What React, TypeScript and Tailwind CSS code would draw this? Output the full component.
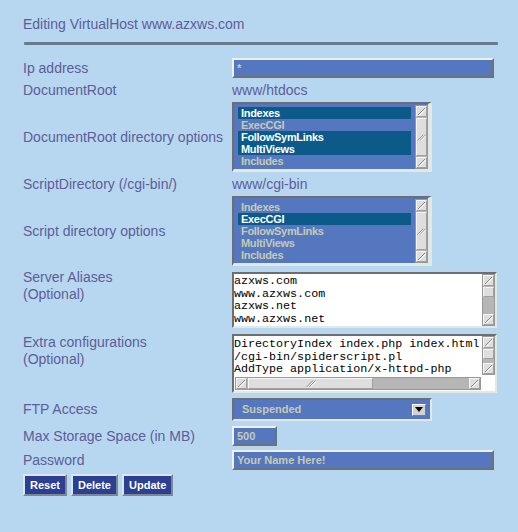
import React from "react";

const LABEL = "w-[209px] shrink-0 text-[14px] leading-[17px] text-[#5d5d98]";
const VALUE = "text-[14px] leading-[17px] text-[#5d5d98]";
const FIELD_TEXT = "font-bold text-[11px] text-[#c5cbb3]";
const INSET =
  "border-t-2 border-l-2 border-t-[#6e6e6e] border-l-[#6e6e6e] border-b-[#e4e8e4] border-r-[#e4e8e4]";
const INPUT =
  "h-[20px] border-2 border-t-[#eef2f4] border-l-[#eef2f4] border-b-[#6c7378] border-r-[#6c7378] bg-[#5577bf] pl-[3px] font-bold text-[11px] text-[#c5cbb3] outline-none";
const MONO = "font-['Liberation_Mono','Courier_New',monospace] text-[11.7px] leading-[12.5px] text-black";

const OPTS = ["Indexes", "ExecCGI", "FollowSymLinks", "MultiViews", "Includes"];

function Btn() {
  return (
    <div className="h-[11px] w-[11px] shrink-0 border border-t-[#f6f6f6] border-l-[#f6f6f6] border-b-[#a0a0a0] border-r-[#a0a0a0] bg-[#dedede]">
      <svg width="9" height="9" viewBox="0 0 9 9" className="block">
        <path d="M1 8 L8 1" stroke="#8a8a8a" strokeWidth="1" />
        <path d="M2 8.6 L8.6 2" stroke="#ffffff" strokeWidth="1" />
      </svg>
    </div>
  );
}

function Grip() {
  return (
    <svg width="10" height="9" viewBox="0 0 10 9" className="block">
      <path d="M0.5 8 L7 1.5" stroke="#8a8a8a" strokeWidth="1" />
      <path d="M1.5 8.5 L7.8 2.2" stroke="#ffffff" strokeWidth="1" />
      <path d="M3 8 L9.5 1.5" stroke="#8a8a8a" strokeWidth="1" />
      <path d="M4 8.5 L10 2.5" stroke="#ffffff" strokeWidth="1" />
    </svg>
  );
}

const THUMB =
  "flex items-center justify-center border border-t-[#f6f6f6] border-l-[#f6f6f6] border-b-[#a0a0a0] border-r-[#a0a0a0] bg-[#dedede]";

// thumb not given => the thumb fills the whole track
function VScroll({ className, thumb }: { className: string; thumb?: string }) {
  return (
    <div className={"flex w-[13px] shrink-0 flex-col gap-px border border-[#979797] bg-[#b6b6b6] " + className}>
      <Btn />
      <div className={THUMB + " " + (thumb ?? "flex-1")}>{!thumb && <Grip />}</div>
      {thumb && <div className="flex-1" />}
      <Btn />
    </div>
  );
}

function HScroll() {
  return (
    <div className="ml-px flex h-[13px] w-[246px] shrink-0 gap-px border border-[#979797] bg-[#b6b6b6]">
      <Btn />
      <div className={THUMB + " w-[125px]"}>
        <Grip />
      </div>
      <div className="flex-1" />
      <Btn />
    </div>
  );
}

function OptionList({ selected }: { selected: string[] }) {
  return (
    <div
      className={
        "flex h-[70px] w-[200px] bg-[#5577bf] border-b-[3px] border-r-[4px] " + INSET
      }
    >
      <div className="flex-1 px-[4px] pt-[3px]">
        {OPTS.map((o) => {
          const on = selected.includes(o);
          return (
            <div
              key={o}
              className={
                "h-[12px] px-[3px] text-[11px] leading-[12px] font-bold tracking-[-0.3px] " +
                (on ? "bg-[#0b5a8a] text-white" : "text-[#c5cbb3]")
              }
            >
              {o}
            </div>
          );
        })}
      </div>
      <VScroll className="mt-px h-[64px]" />
    </div>
  );
}

function Button({ children }: { children: React.ReactNode }) {
  return (
    <button
      type="button"
      className="h-[22px] border-2 border-t-[#dde6ee] border-l-[#dde6ee] border-b-[#7f8791] border-r-[#7f8791] bg-[#2b3f93] px-[5px] text-[11px] font-bold text-white"
    >
      {children}
    </button>
  );
}

export default function App() {
  return (
    <div className="min-h-screen w-full bg-[#b7d7f0] pl-[23px] pt-[14px] font-['Liberation_Sans',Arial,sans-serif]">
      <h1 className="text-[14px] leading-[20px] font-normal text-[#5d5d98]">
        Editing VirtualHost www.azxws.com
      </h1>
      <div className="ml-px mt-[8px] h-[3px] w-[474px] rounded-[1px] bg-[#687b8d]" />

      <div className="mt-[13px] flex flex-col">
        <div className="flex h-[20px] items-center">
          <div className={LABEL}>Ip address</div>
          <input readOnly defaultValue="*" className={INPUT + " w-[262px]"} />
        </div>

        <div className="mt-[2px] flex h-[20px] items-center">
          <div className={LABEL}>DocumentRoot</div>
          <div className={VALUE}>www/htdocs</div>
        </div>

        <div className="mt-[2px] flex items-center">
          <div className={LABEL}>DocumentRoot directory options</div>
          <OptionList selected={["Indexes", "FollowSymLinks", "MultiViews"]} />
        </div>

        <div className="mt-[2px] flex h-[20px] items-center">
          <div className={LABEL}>ScriptDirectory (/cgi-bin/)</div>
          <div className={VALUE}>www/cgi-bin</div>
        </div>

        <div className="mt-[2px] flex items-center">
          <div className={LABEL}>Script directory options</div>
          <OptionList selected={["ExecCGI"]} />
        </div>

        <div className="mt-[6px] flex items-start">
          <div className={LABEL + " -mt-[3px]"}>
            Server Aliases
            <br />
            (Optional)
          </div>
          <div className={"flex h-[56px] w-[265px] border-2 bg-white " + INSET}>
            <div className={"flex-1 overflow-hidden whitespace-pre pt-px " + MONO}>
              {"azxws.com\nwww.azxws.com\nazxws.net\nwww.azxws.net\nmail.azxws.com"}
            </div>
            <VScroll className="h-[52px]" thumb="h-[10px]" />
          </div>
        </div>

        <div className="mt-[6px] flex items-start">
          <div className={LABEL + " leading-[16px]"}>
            Extra configurations
            <br />
            (Optional)
          </div>
          <div className={"flex h-[59px] w-[265px] flex-col border-2 bg-white " + INSET}>
            <div className="flex h-[41px]">
              <div className={"flex-1 overflow-hidden whitespace-pre pt-[2px] " + MONO}>
                {"DirectoryIndex index.php index.html\n/cgi-bin/spiderscript.pl\nAddType application/x-httpd-php"}
              </div>
              <VScroll className="h-[39px]" thumb="h-[10px]" />
            </div>
            <HScroll />
          </div>
        </div>

        <div className="mt-[5px] flex items-center">
          <div className={LABEL}>FTP Access</div>
          <div className={"flex h-[23px] w-[200px] items-center border-2 bg-[#5577bf] pl-[8px] pr-[4px] " + INSET}>
            <span className={FIELD_TEXT + " flex-1"}>Suspended</span>
            <div className="flex h-[12px] w-[14px] items-center justify-center border border-t-white border-l-white border-b-[#7c7c7c] border-r-[#7c7c7c] bg-[#d2d2d2]">
              <svg width="8" height="5" viewBox="0 0 8 5" className="block">
                <polygon points="0,0 8,0 4,5" fill="#000" />
              </svg>
            </div>
          </div>
        </div>

        <div className="mt-[5px] flex h-[20px] items-center">
          <div className={LABEL}>Max Storage Space (in MB)</div>
          <input readOnly defaultValue="500" className={INPUT + " w-[45px]"} />
        </div>

        <div className="mt-[4px] flex h-[20px] items-center">
          <div className={LABEL}>Password</div>
          <input readOnly defaultValue="Your Name Here!" className={INPUT + " w-[262px]"} />
        </div>

        <div className="mt-[4px] flex gap-[4px]">
          <Button>Reset</Button>
          <Button>Delete</Button>
          <Button>Update</Button>
        </div>
      </div>
    </div>
  );
}
